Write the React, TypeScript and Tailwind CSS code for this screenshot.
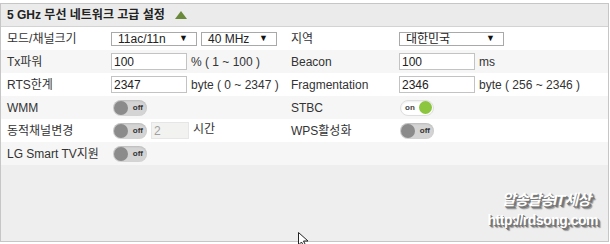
import React from 'react';

const font = { fontFamily: '"Liberation Sans", "Noto Sans CJK KR", sans-serif' };

function Toggle({ on }: { on?: boolean }) {
  if (on) {
    return (
      <div className="flex h-[16px] w-[34px] items-center justify-between rounded-full border border-[#dedede] bg-white pl-[4px] pr-[1px] shadow-[inset_0_1px_2px_rgba(0,0,0,0.08)]">
        <span className="text-[8px] font-bold leading-none text-[#444]">on</span>
        <span className="h-[13px] w-[13px] rounded-full bg-[#8cc63f]" />
      </div>
    );
  }
  return (
    <div className="flex h-[16px] w-[34px] items-center justify-between rounded-full bg-[#d4d4d4] pl-[1px] pr-[4px] shadow-[inset_0_1px_2px_rgba(0,0,0,0.12)]">
      <span className="h-[14px] w-[14px] rounded-full bg-[#8b8b8b]" />
      <span className="text-[8px] font-bold leading-none text-[#333]">off</span>
    </div>
  );
}

function Select({ value, w }: { value: string; w: string }) {
  return (
    <div className={`flex h-[14px] items-center justify-between border border-[#a9a9a9] bg-white pl-[6px] pr-[8px] ${w}`}>
      <span className="text-[12px] leading-none text-[#222]">{value}</span>
      <span className="text-[9px] leading-none text-[#111]">▼</span>
    </div>
  );
}

function Input({ value, disabled, w = 'w-[76px]' }: { value: string; disabled?: boolean; w?: string }) {
  return (
    <div
      className={`flex h-[17px] items-center border px-[2px] text-[12px] leading-none ${w} ${
        disabled ? 'border-[#e6e6e6] bg-[#f2f2f0] text-[#a0a0a0]' : 'border-[#c3c3c3] bg-white text-[#222]'
      }`}
    >
      {value}
    </div>
  );
}

function Row({ gray, label, field, label2, field2 }: { gray?: boolean; label: string; field: React.ReactNode; label2?: string; field2?: React.ReactNode }) {
  return (
    <div className={`grid h-[23px] grid-cols-[104px_180px_108px_1fr] items-center pl-[6px] text-[12px] text-[#333] ${gray ? 'bg-[#f6f6f6]' : 'bg-white'}`}>
      <div>{label}</div>
      <div className="flex items-center gap-[4px]">{field}</div>
      <div>{label2}</div>
      <div className="flex items-center gap-[4px]">{field2}</div>
    </div>
  );
}

export default function App() {
  return (
    <div className="relative h-[244px] w-[610px] overflow-hidden bg-white pt-[3px]" style={font}>
      <div className="flex h-[239px] w-[609px] flex-col border border-[#c6c6c6] bg-[#eeeeee]">
        <div className="flex h-[23px] items-center gap-[10px] border-b border-[#d3d3d3] bg-[#ebebeb] pl-[6px]">
          <span className="text-[12px] font-bold text-[#222]">5 GHz 무선 네트워크 고급 설정</span>
          <svg width="12" height="8" viewBox="0 0 12 8">
            <polygon points="6,0 12,8 0,8" fill="#6a8a3a" />
          </svg>
        </div>

        <Row
          label="모드/채널크기"
          field={
            <>
              <Select value="11ac/11n" w="w-[86px]" />
              <Select value="40 MHz" w="w-[76px]" />
            </>
          }
          label2="지역"
          field2={<Select value="대한민국" w="w-[105px]" />}
        />
        <Row
          gray
          label="Tx파워"
          field={
            <>
              <Input value="100" />
              <span>% ( 1 ~ 100 )</span>
            </>
          }
          label2="Beacon"
          field2={
            <>
              <Input value="100" />
              <span>ms</span>
            </>
          }
        />
        <Row
          label="RTS한계"
          field={
            <>
              <Input value="2347" />
              <span>byte ( 0 ~ 2347 )</span>
            </>
          }
          label2="Fragmentation"
          field2={
            <>
              <Input value="2346" />
              <span>byte ( 256 ~ 2346 )</span>
            </>
          }
        />
        <Row
          gray
          label="WMM"
          field={<div className="pl-[2px]"><Toggle /></div>}
          label2="STBC"
          field2={<div className="pl-[1px]"><Toggle on /></div>}
        />
        <Row
          label="동적채널변경"
          field={
            <>
              <div className="pl-[2px]"><Toggle /></div>
              <Input value="2" disabled w="w-[38px]" />
              <span className="-mt-[3px]">시간</span>
            </>
          }
          label2="WPS활성화"
          field2={<div className="pl-[1px]"><Toggle /></div>}
        />
        <Row gray label="LG Smart TV지원" field={<div className="pl-[2px]"><Toggle /></div>} />

        <div className="flex flex-1 flex-col items-end justify-end pb-[14px] pr-[10px]">
          <div
            className="pr-[8px] text-[15px] font-bold italic leading-none tracking-[-1px] text-white"
            style={{ textShadow: '1px 1px 0 #777, 2px 2px 0 #777, 3px 3px 1px #999' }}
          >
            알송달송IT세상
          </div>
          <div
            className="mt-[6px] text-[14px] font-bold leading-none tracking-[-0.5px] text-white"
            style={{ textShadow: '1px 1px 0 #777, 2px 2px 0 #777, 3px 3px 1px #999' }}
          >
            http://rdsong.com
          </div>
        </div>
      </div>

      <svg className="absolute left-[298px] top-[232px]" width="12" height="16" viewBox="0 0 12 16">
        <path d="M0.5 0.5 L0.5 13 L3.5 10 L6 15 L8 14 L5.5 9 L10 9 Z" fill="#fff" stroke="#222" strokeWidth="1" />
      </svg>
    </div>
  );
}
